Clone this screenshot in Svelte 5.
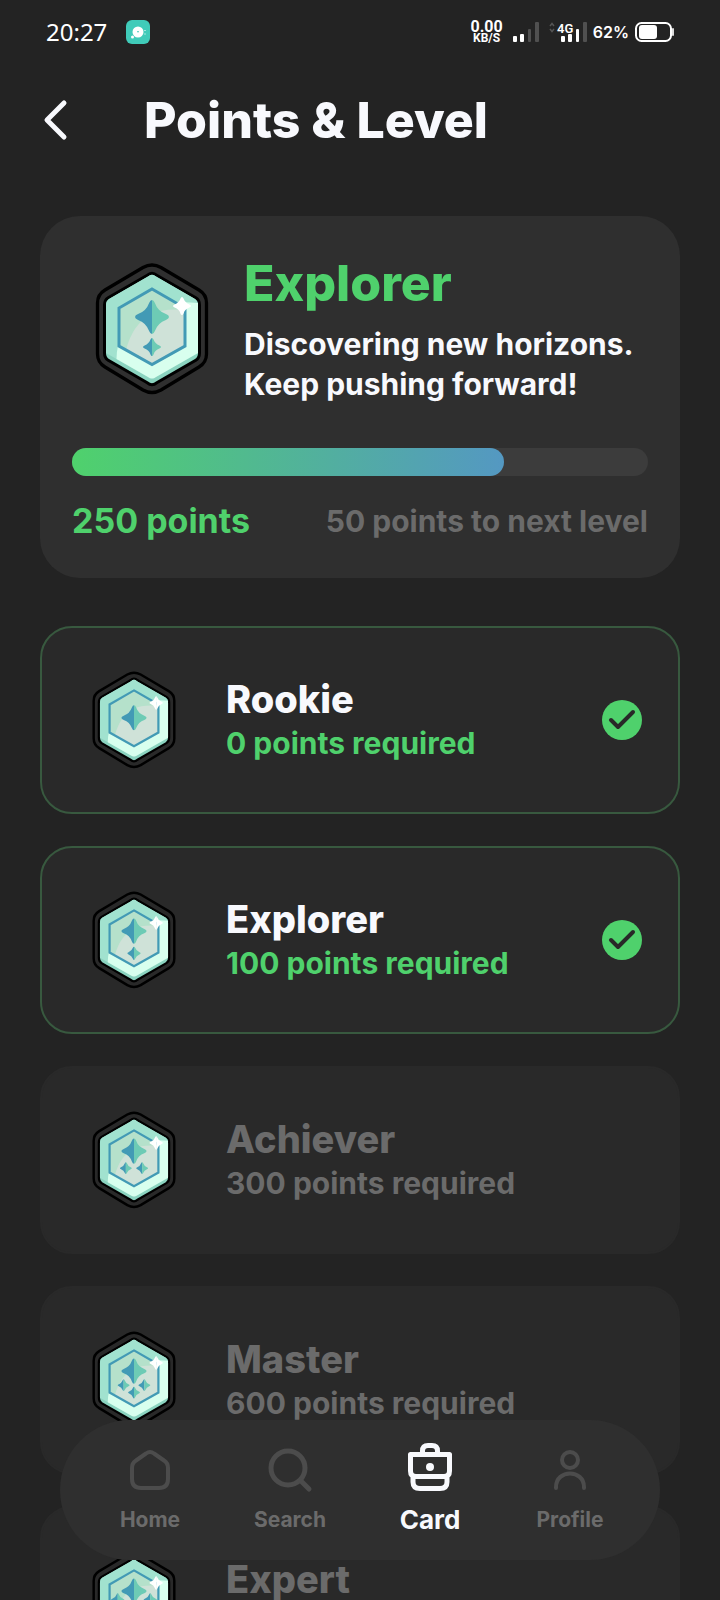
<script>
  const earned = 250;
  const target = 300;
  const progress = 75;

  // Each star is [x, y, radius] on the 124 x 146 badge canvas.
  const big = [62, 61, 17];
  const tiers = [
    { name: 'Rookie', points: 0, done: true, stars: [[62, 70, 17]] },
    { name: 'Explorer', points: 100, done: true, stars: [big, [62, 91, 9]] },
    { name: 'Achiever', points: 300, done: false, stars: [big, [51, 84, 8], [73, 84, 8]] },
    { name: 'Master', points: 600, done: false, stars: [big, [48, 80, 8], [76, 80, 8], [62, 90, 8]] },
    { name: 'Expert', points: 1000, done: false, stars: [big, [40, 73, 9], [84, 73, 9], [51, 86, 8], [73, 86, 8]] }
  ];

  const halfStar = (r, side) => {
    const x = (k) => k * r * side;
    const y = (k) => k * r;
    return `M0 ${y(-1)} Q${x(0.1)} ${y(-1)} ${x(0.17)} ${y(-0.82)} Q${x(0.34)} ${y(-0.34)} ${x(0.82)} ${y(-0.17)} Q${x(1)} ${y(-0.1)} ${x(1)} 0 Q${x(1)} ${y(0.1)} ${x(0.82)} ${y(0.17)} Q${x(0.34)} ${y(0.34)} ${x(0.17)} ${y(0.82)} Q${x(0.1)} ${y(1)} 0 ${y(1)}Z`;
  };
</script>

{#snippet badge(stars, kind)}
  <svg class="badge {kind}" viewBox="0 0 124 146" aria-hidden="true">
    <path d="M53 11.500 Q62 6.500 71 11.500 L109 34 Q116.500 38.500 116.500 47 V98 Q116.500 106.500 109 111 L71 134 Q62 139 53 134 L15 111 Q7.500 106.500 7.500 98 V47 Q7.500 38.500 15 34Z" fill="none" stroke="#000" stroke-width="3.300" />
    <path d="M58 20.500 Q62 17 66 20.500 L105 43 Q108 45 108 49 V97 Q108 101 105 103 L66 125.500 Q62 129 58 125.500 L19 103 Q16 101 16 97 V49 Q16 45 19 43Z" fill="#8bd4c0" stroke="#000" stroke-width="6" />
    <path d="M58 20.500 Q62 17 66 20.500 L105 43 Q108 45 108 49 V97 Q108 101 105 103 L66 125.500 Q62 129 58 125.500 L19 103 Q16 101 16 97 V49 Q16 45 19 43Z" fill="#8bd4c0" />
    <path d="M58 20.500 Q62 17 66 20.500 L105 43 Q108 45 108 49 V97 L66 121 Q62 124 58 121 L16 97 V49 Q16 45 19 43Z" fill="#a1e2cf" />
    <path d="M26.500 103 Q27 74 48 58 Q70 43 108 47 V97 L66 121 Q62 124 58 121Z" fill="#d8ffee" />
    <path d="M62 33 L95 52 V90 L62 108.500 L29 90 V52Z" fill="#b5e1cb" />
    <path d="M36 94 Q43 67 62 58 Q74 52 95 54 V90 L62 108.500Z" fill="#cfe2d8" />
    <path d="M62 33 L95 52 V90 L62 108.500 L29 90 V52Z" fill="none" stroke="#429ab5" stroke-width="3" />
    {#each stars as [x, y, r]}
      <g transform="translate({x} {y})">
        <path d={halfStar(r, -1)} fill="#429ab5" />
        <path d={halfStar(r, 1)} fill="#6dcbb5" />
      </g>
    {/each}
    <g transform="translate(92 50)" fill="#fff">
      <path d={halfStar(9, -1)} />
      <path d={halfStar(9, 1)} />
    </g>
  </svg>
{/snippet}

<div class="screen">
  <div class="status">
    <div class="left">
      <span class="clock">20:27</span>
      <svg width="24" height="24" viewBox="0 0 24 24" aria-hidden="true">
        <rect width="24" height="24" rx="6" fill="#40cbb9" />
        <circle cx="12" cy="12" r="5.500" fill="#fff" />
        <circle cx="6.500" cy="17" r="1.500" fill="#fff" />
        <path d="M11 11 h2 l-1 2Z" fill="#40cbb9" />
        <path d="M18 10.500h2M18 14h2" stroke="#a3e7df" />
      </svg>
    </div>
    <div class="right">
      <span class="speed"><b>0.00</b><small>KB/S</small></span>
      <svg class="signal" width="26" height="20" viewBox="0 0 26 20" aria-hidden="true">
        <rect y="14" width="4" height="6" rx="1" fill="#fff" /><rect x="7" y="12" width="4" height="8" rx="1" fill="#fff" />
        <rect x="15" y="7" width="3" height="13" rx="1" fill="#505050" /><rect x="22" width="4" height="20" rx="1" fill="#505050" />
      </svg>
      <svg width="38" height="20" viewBox="0 0 38 20" aria-label="Mobile signal">
        <path d="M1 4 L3 1.500 L5 4 M1 7 L3 9.500 L5 7" fill="none" stroke="#555" stroke-width="1.500" />
        <text x="8" y="11" class="net">4G</text>
        <rect x="12" y="14" width="4" height="6" rx="1" fill="#fff" /><rect x="19" y="12" width="4" height="8" rx="1" fill="#fff" />
        <rect x="27" y="7" width="3" height="13" rx="1" fill="#fff" /><rect x="34" width="4" height="20" rx="1" fill="#505050" />
      </svg>
      <span class="percent">62%</span>
      <svg width="40" height="20" viewBox="0 0 40 20" aria-hidden="true">
        <rect x="1" y="1" width="35" height="18" rx="5.500" fill="none" stroke="#fff" stroke-width="2" />
        <rect x="4" y="3" width="18" height="14" rx="3" fill="#fff" /><rect x="37" y="6" width="2" height="8" rx="1" fill="#ddd" />
      </svg>
    </div>
  </div>

  <header>
    <button class="back" aria-label="Back">
      <svg width="24" height="40" viewBox="0 0 24 40"><path d="M20 3 L3 20 L20 37" fill="none" stroke="#f8f9fd" stroke-width="5" stroke-linecap="round" stroke-linejoin="round" /></svg>
    </button>
    <h1>Points &amp; Level</h1>
  </header>

  <main>
    <section class="summary">
      <div class="intro">
        {@render badge(tiers[1].stars, 'large')}
        <div>
          <h2>Explorer</h2>
          <p>Discovering new horizons.<br />Keep pushing forward!</p>
        </div>
      </div>
      <div class="track"><div class="fill" style="width: {progress}%"></div></div>
      <div class="totals">
        <strong>{earned} points</strong>
        <span>{target - earned} points to next level</span>
      </div>
    </section>

    <ul>
      {#each tiers as tier}
        <li class:done={tier.done}>
          {@render badge(tier.stars, 'small')}
          <div class="label">
            <h3>{tier.name}</h3>
            <p>{tier.points} points required</p>
          </div>
          {#if tier.done}
            <svg width="40" height="40" viewBox="0 0 40 40" aria-hidden="true">
              <circle cx="20" cy="20" r="20" fill="#4fd16c" />
              <path d="M9 20 L16 27 L31 12" fill="none" stroke="#282828" stroke-width="4" stroke-linecap="round" stroke-linejoin="round" />
            </svg>
          {/if}
        </li>
      {/each}
    </ul>
  </main>

  <nav>
    <a href="#home">
      <svg viewBox="0 0 48 48" aria-hidden="true"><path d="M20 10.500 Q24 7.500 28 10.500 L38 17.500 Q42 20 42 25 V36 Q42 45 33 45 H15 Q6 45 6 36 V25 Q6 20 10 17.500Z" stroke-width="4" /></svg>
      <span>Home</span>
    </a>
    <a href="#search">
      <svg viewBox="0 0 48 48" aria-hidden="true"><circle cx="22" cy="25" r="17" stroke-width="5" /><path d="M35 38 L43 46" stroke-width="5" /></svg>
      <span>Search</span>
    </a>
    <a href="#card" class="active">
      <svg viewBox="0 0 48 48" aria-hidden="true">
        <path d="M4.500 11.500 H43.500 V28 Q43.500 33.500 38 33.500 H10 Q4.500 33.500 4.500 28Z M16.500 11 V8 Q16.500 2.500 22 2.500 H26 Q31.500 2.500 31.500 8 V11 M7 33.500 V39 Q7 45.500 14 45.500 H34 Q41 45.500 41 39 V33.500" stroke-width="5" />
        <circle cx="24" cy="24" r="4" fill="currentColor" stroke="none" />
      </svg>
      <span>Card</span>
    </a>
    <a href="#profile">
      <svg viewBox="0 0 48 48" aria-hidden="true"><circle cx="24" cy="17" r="8" stroke-width="4" /><path d="M10 45 V44 C10 26 38 26 38 44 V45" stroke-width="4" /></svg>
      <span>Profile</span>
    </a>
  </nav>
</div>

<style>
  :global(body) { background: #232323; }
  h1, h2, h3, p, ul { margin: 0; padding: 0; font-weight: 700; }
  svg { display: block; flex: none; overflow: visible; }
  .screen {
    position: relative;
    display: flex;
    flex-direction: column;
    height: 100vh;
    overflow: hidden;
    box-sizing: border-box;
    background: #232323;
    color: #f8f9fd;
    font-family: Inter, sans-serif;
  }
  .status {
    display: flex;
    flex: none;
    justify-content: space-between;
    height: 64px;
    padding: 0 45px 0 46px;
    color: #fff;
  }
  .left, .right { display: flex; align-items: center; }
  .left { gap: 19px; }
  .clock { font: 400 24px/28px "Noto Sans", sans-serif; }
  .speed { display: flex; flex-direction: column; align-items: center; }
  .speed b { font: 700 16px/13px Roboto, sans-serif; }
  .speed small { font: 700 12px/11px Roboto, sans-serif; }
  .signal { margin: 0 10px; }
  .net { font: 600 13px Roboto, sans-serif; fill: #fff; }
  .percent { margin: 0 6px; font-size: 16px; font-weight: 600; }
  header {
    display: flex;
    flex: none;
    align-items: center;
    height: 112px;
    padding: 0 44px;
    gap: 76px;
  }
  .back { padding: 0; border: 0; background: none; }
  h1 { font-size: 50px; line-height: 56px; font-weight: 800; }
  main {
    flex: 1;
    min-height: 0;
    padding: 40px 40px 0;
    overflow-y: auto;
    scrollbar-width: none;
  }
  .summary { padding: 37px 32px; border-radius: 40px; background: #2f2f2f; }
  .intro { display: flex; align-items: center; gap: 30px; padding-left: 18px; }
  .large { width: 124px; height: 146px; }
  .small { width: 92px; height: 108px; }
  h2 { color: #4fd16c; font-size: 50px; line-height: 60px; font-weight: 800; }
  .intro p { margin-top: 11px; font-size: 30px; line-height: 40px; white-space: nowrap; }
  .track { height: 28px; margin-top: 44px; border-radius: 14px; background: #3c3c3c; }
  .fill { height: 100%; border-radius: 14px; background: linear-gradient(90deg, #4fd16c, #5498c2); }
  .totals {
    display: flex;
    align-items: center;
    justify-content: space-between;
    margin-top: 25px;
    line-height: 40px;
    font-weight: 700;
  }
  .totals strong { color: #4fd16c; font-size: 34px; font-weight: 700; }
  .totals span { color: #6b6b6b; font-size: 30px; }
  ul { display: grid; gap: 32px; margin-top: 48px; padding-bottom: 200px; list-style: none; }
  li {
    display: flex;
    align-items: center;
    height: 188px;
    box-sizing: border-box;
    padding: 0 36px 0 46px;
    border: 2px solid #292929;
    border-radius: 32px;
    background: #292929;
    color: #6b6b6b;
  }
  .done { border-color: #38593f; color: #f8f9fd; }
  .label { flex: 1; margin-left: 46px; padding-top: 2px; }
  h3 { font-size: 38px; line-height: 44px; font-weight: 800; }
  .label p { font-size: 30px; line-height: 44px; }
  .done p { color: #4fd16c; }
  nav {
    position: absolute;
    right: 60px;
    bottom: 40px;
    left: 60px;
    display: grid;
    grid-template-columns: repeat(4, 1fr);
    height: 140px;
    box-sizing: border-box;
    padding: 23px 20px 0;
    border-radius: 70px;
    background: #2f2f2f;
  }
  nav a {
    display: flex;
    flex-direction: column;
    align-items: center;
    gap: 15px;
    color: #4c4c4c;
    text-decoration: none;
  }
  nav svg { width: 48px; height: 48px; fill: none; stroke: currentColor; stroke-linecap: round; stroke-linejoin: round; }
  nav span { color: #6b6b6b; font-size: 21px; line-height: 28px; font-weight: 700; }
  nav .active, .active span { color: #f8f9fd; }
  .active span { font-size: 26px; }
</style>
